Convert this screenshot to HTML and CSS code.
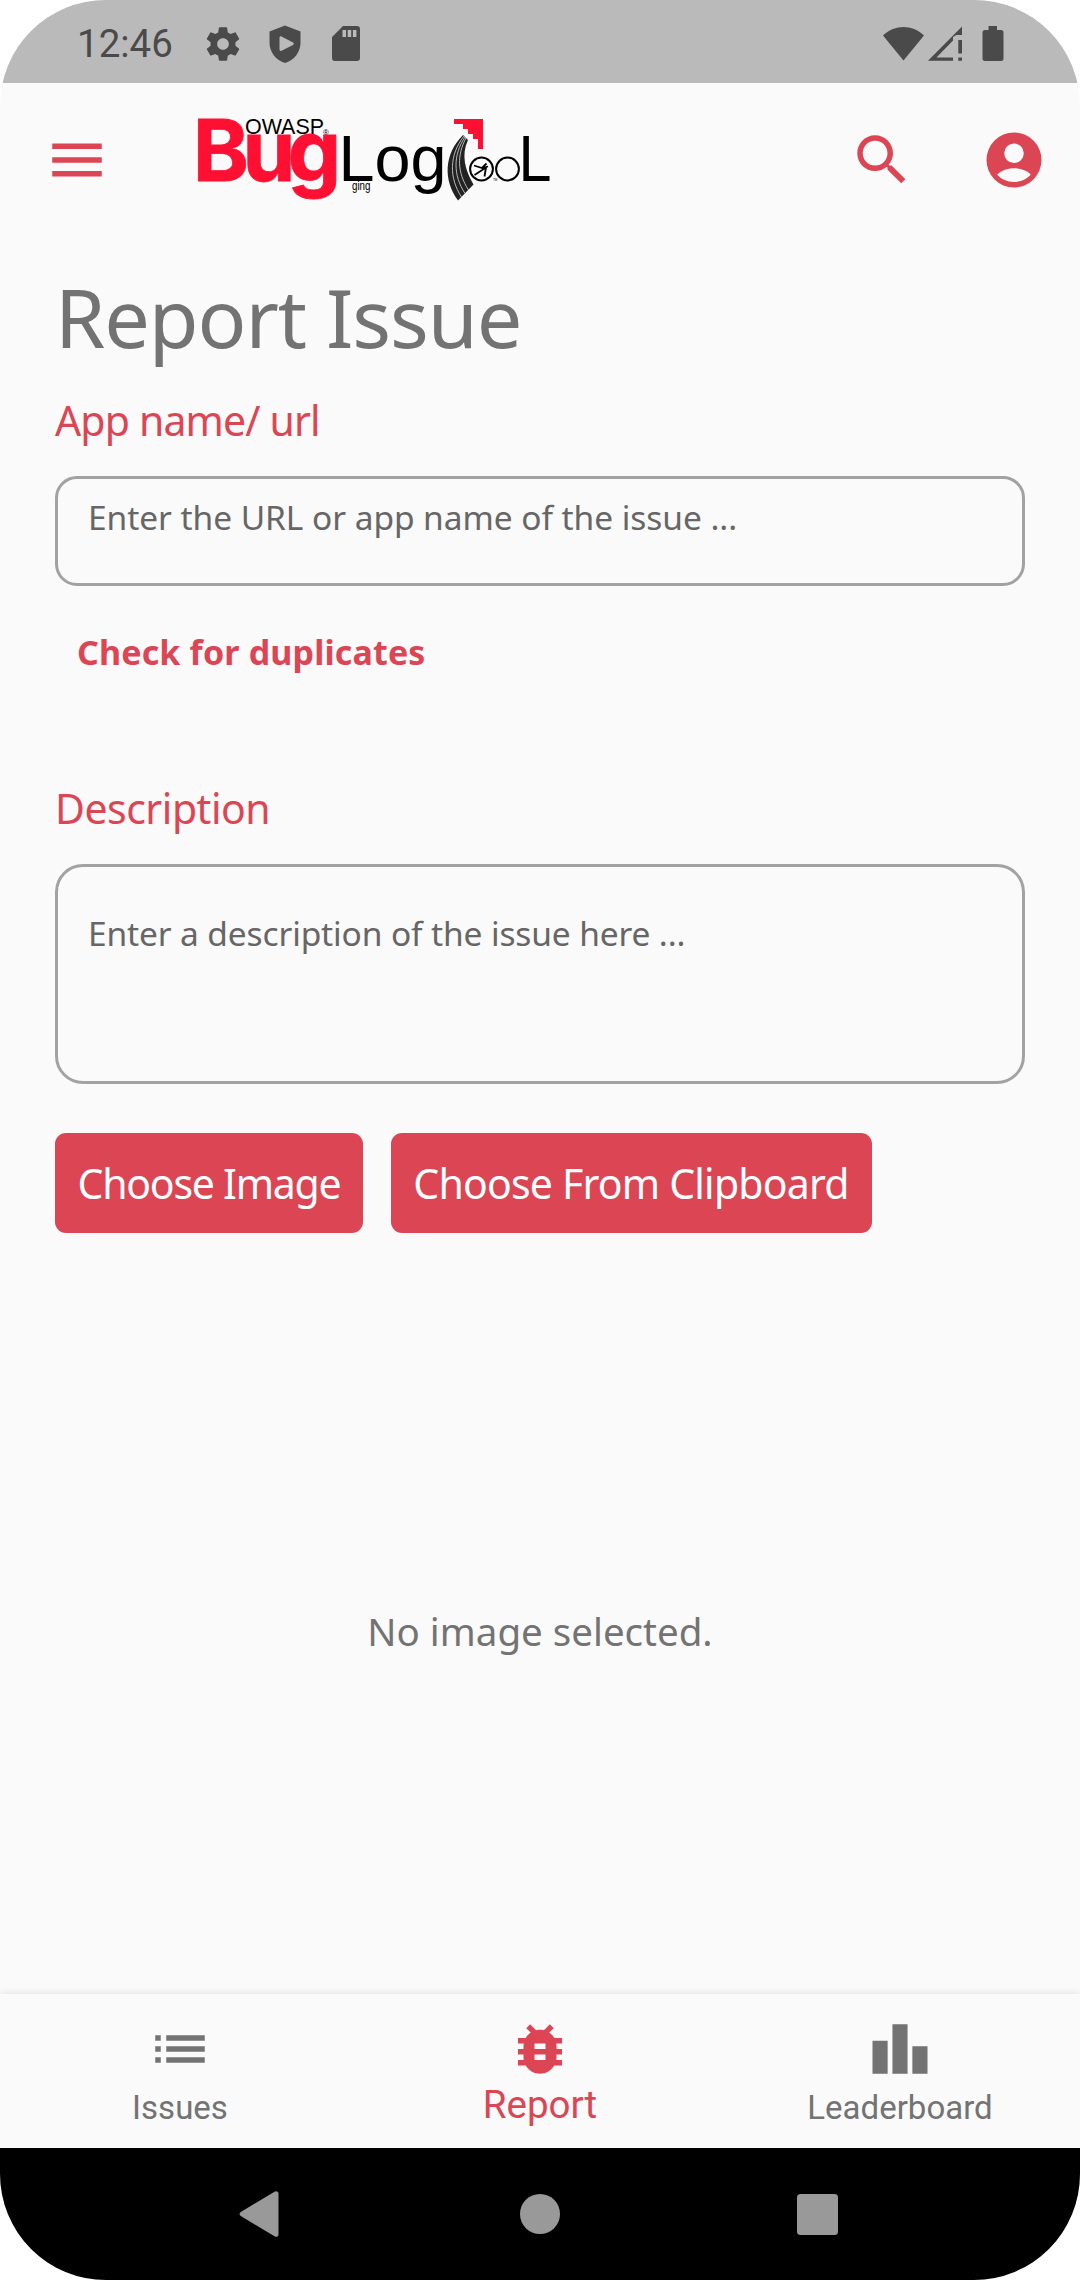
FILE: index.html
```html
<!DOCTYPE html>
<html lang="en">
<head>
<meta charset="utf-8">
<title>BugLog – Report Issue</title>
<link rel="stylesheet" href="styles.css">
</head>
<body>
<div class="phone">
  <header class="status">
    <span class="clock">12:46</span>
    <svg class="gear" width="40" height="40" viewBox="0 0 24 24"><path d="M19.43 12.98c.04-.32.07-.64.07-.98s-.03-.66-.07-.98l2.11-1.65c.19-.15.24-.42.12-.64l-2-3.46c-.12-.22-.39-.3-.61-.22l-2.49 1c-.52-.4-1.08-.73-1.69-.98l-.38-2.65C14.46 2.18 14.25 2 14 2h-4c-.25 0-.46.18-.49.42l-.38 2.65c-.61.25-1.17.59-1.69.98l-2.49-1c-.23-.09-.49 0-.61.22l-2 3.46c-.13.22-.07.49.12.64l2.11 1.65c-.04.32-.07.65-.07.98s.03.66.07.98l-2.11 1.65c-.19.15-.24.42-.12.64l2 3.46c.12.22.39.3.61.22l2.49-1c.52.4 1.08.73 1.69.98l.38 2.65c.03.24.24.42.49.42h4c.25 0 .46-.18.49-.42l.38-2.65c.61-.25 1.17-.59 1.69-.98l2.49 1c.23.09.49 0 .61-.22l2-3.46c.12-.22.07-.49-.12-.64l-2.11-1.65zM12 15.5c-1.93 0-3.5-1.57-3.5-3.5s1.570-3.5 3.500-3.500 3.500 1.570 3.500 3.500-1.570 3.500-3.500 3.500z"/></svg>
    <svg class="shield" width="32" height="38" viewBox="0 0 32 38"><path fill-rule="evenodd" d="M16 0.500 31.500 6.500V18C31.500 27 25 35.500 16 38 7 35.500.500 27 .500 18V6.500ZM12.500 11.500C11.500 11 10.500 11.600 10.500 12.800V24.400c0 1.200 1 1.800 2 1.300l11.500-5.700c1-.6 1-1.900 0-2.500Z"/></svg>
    <svg class="sd" width="28" height="35" viewBox="0 0 28 35"><path fill-rule="evenodd" d="M11 0H25a3 3 0 0 1 3 3V32a3 3 0 0 1-3 3H3a3 3 0 0 1-3-3V11ZM10.500 4V11H14V4ZM15.700 4V11H19.200V4ZM20.900 4V11H24.400V4Z"/></svg>
    <svg class="radio" width="122" height="38" viewBox="0 0 122 38"><path d="M0 10.500C12-.700 29-.700 41 10.500L20.500 35.500Z"/><path fill-rule="evenodd" d="M45 35.700 79 1.500V10H73.500L70 12V35.700ZM53.500 32.500H70V15.500ZM75.300 15H79V28.500H75.300ZM75.300 32.500H79V35.700H75.300Z"/><path d="M105.500 1H114V5H118a2.500 2.500 0 0 1 2.500 2.500V33.500a2.500 2.500 0 0 1-2.500 2.500H102a2.500 2.500 0 0 1-2.500-2.500V7.500A2.500 2.500 0 0 1 102 5H105.500Z"/></svg>
  </header>

  <div class="appbar">
    <svg class="icon" viewBox="0 0 24 24"><path d="M3 18h18v-2H3v2zm0-5h18v-2H3v2zm0-7v2h18V6H3z"/></svg>
    <svg class="logo" width="360" height="90" viewBox="196 115 360 90">
      <g font-family="Liberation Sans, Arial, sans-serif">
        <text class="bug bug-word" x="192.700 242.500 287.500" y="181">Bug</text>
        <text x="245" y="134" font-size="22" textLength="79" lengthAdjust="spacingAndGlyphs">OWASP</text>
        <text x="323" y="134.500" font-size="8">®</text>
        <text x="338.400" y="181" font-size="64" textLength="108" lengthAdjust="spacingAndGlyphs">Log</text>
        <text x="352" y="190" font-size="12" textLength="18.500" lengthAdjust="spacingAndGlyphs">ging</text>
        <text x="518.400" y="181" font-size="64" textLength="33" lengthAdjust="spacingAndGlyphs">L</text>
        <text x="493" y="181" font-size="3">TM</text>
      </g>
      <path class="bug" d="M454 119H483V149H478V139H473V134H468V129H463V124H454Z"/>
      <path fill="#222" d="M463 135C444 154 443 180 458 200.500L473.500 184.500C465 170 461 155 468 140Z"/>
      <g class="ribs"><path d="M464 136C449 155 449 178 461.500 197"/><path d="M465 137C453 155 453 175 465 193.500"/><path d="M466 138C457 155 457 172 468.500 190"/></g>
      <circle class="ring" cx="481.500" cy="169" r="11.400"/>
      <circle class="ring" cx="507.500" cy="169" r="11.400"/>
      <g class="fly"><path d="M474 165.500 482 168 486.500 163.500M474.500 175 486 167.500 484.500 176.500M482 168 488 166.500"/></g>
    </svg>
    <svg class="icon search" viewBox="0 0 24 24"><path d="M15.500 14h-.79l-.28-.27C15.410 12.590 16 11.110 16 9.500 16 5.910 13.090 3 9.500 3S3 5.910 3 9.500 5.910 16 9.500 16c1.610 0 3.090-.59 4.230-1.570l.27.28v.79l5 4.990L20.490 19l-4.990-5zm-6 0C7.010 14 5 11.990 5 9.500S7.010 5 9.500 5 14 7.010 14 9.500 11.990 14 9.500 14z"/></svg>
    <svg class="icon" viewBox="0 0 24 24"><path fill-rule="evenodd" d="M12 2a10 10 0 1 0 0 20 10 10 0 0 0 0-20ZM12 6a3.550 3.550 0 1 1 0 7.100A3.550 3.550 0 0 1 12 6ZM5.900 17.300C7.300 15.900 9.500 15 12 15s4.700.9 6.100 2.300C16.700 19 14.500 20 12 20s-4.700-1-6.100-2.700Z"/></svg>
  </div>

  <main class="form">
    <h1 class="title">Report Issue</h1>
    <h2 class="label label-app">App name/ url</h2>
    <div class="field"><span class="hint hint-app">Enter the URL or app name of the issue ...</span></div>
    <a class="check">Check for duplicates</a>
    <h2 class="label label-desc">Description</h2>
    <div class="field area"><span class="hint hint-desc">Enter a description of the issue here ...</span></div>
    <div class="buttons">
      <button class="btn btn-image">Choose Image</button>
      <button class="btn btn-clip">Choose From Clipboard</button>
    </div>
    <p class="empty">No image selected.</p>
  </main>

  <nav class="tabs">
    <div class="tab"><svg class="icon" viewBox="0 0 24 24"><path d="M3 13h2v-2H3v2zm0 4h2v-2H3v2zm0-8h2V7H3v2zm4 4h14v-2H7v2zm0 4h14v-2H7v2zM7 7v2h14V7H7z"/></svg><span>Issues</span></div>
    <div class="tab active"><svg class="icon" viewBox="0 0 24 24"><path d="M20 8h-2.810c-.45-.78-1.070-1.450-1.820-1.960L17 4.410 15.590 3l-2.170 2.170C12.960 5.060 12.490 5 12 5c-.49 0-.96.06-1.410.17L8.410 3 7 4.410l1.620 1.630C7.880 6.550 7.260 7.220 6.810 8H4v2h2.090c-.05.33-.09.66-.09 1v1H4v2h2v1c0 .34.04.67.09 1H4v2h2.810c1.040 1.790 2.970 3 5.190 3s4.150-1.210 5.190-3H20v-2h-2.090c.05-.33.09-.66.09-1v-1h2v-2h-2v-1c0-.34-.04-.67-.09-1H20V8zm-6 8h-4v-2h4v2zm0-4h-4v-2h4v2z"/></svg><span>Report</span></div>
    <div class="tab"><svg class="icon" viewBox="0 0 24 24"><path d="M7.500 21H2V9h5.500v12zm7.250-18h-5.500v18h5.500V3zM22 11h-5.500v10H22V11z"/></svg><span>Leaderboard</span></div>
  </nav>

  <footer class="system">
    <svg width="40" height="46" viewBox="0 0 40 46"><path d="M35.500.700C37.500-.500 39.500.500 39.500 2.500V43.500c0 2-2 3-4 1.800L1.800 25c-1.700-1-1.700-3 0-4Z"/></svg>
    <svg class="home" width="40" height="40" viewBox="0 0 40 40"><circle cx="20" cy="20" r="20"/></svg>
    <svg width="41" height="41" viewBox="0 0 41 41"><rect width="41" height="41" rx="3.500"/></svg>
  </footer>
</div>
</body>
</html>
```
FILE: styles.css
```css
* { box-sizing: border-box; }
body { margin: 0; background: #fff; }
h1, h2, p { margin: 0; font-weight: 400; }
svg { display: block; flex: none; }

.phone {
  width: 1080px;
  height: 2280px;
  display: flex;
  flex-direction: column;
  background: #fafafa;
  border-radius: 106px;
  overflow: hidden;
  font-family: "Noto Sans", "Open Sans", sans-serif;
  white-space: nowrap;
}

.status {
  height: 83px;
  flex: none;
  display: flex;
  align-items: center;
  padding: 4px 75px 0 77px;
  background: #bababa;
  fill: #4a4a4a;
}
.clock { width: 126px; font: 38.500px/46px Roboto, sans-serif; color: #4a4a4a; }
.shield { margin-left: 26px; }
.sd { margin-left: 31px; }
.radio { margin-left: auto; }

.appbar {
  height: 154px;
  flex: none;
  display: flex;
  align-items: center;
  padding: 0 33px 0 44px;
  fill: #dc4654;
}
.icon { width: 66px; height: 66px; }
.logo { margin-left: 86px; fill: #000; overflow: visible; }
.logo .bug { fill: #ff1033; }
.bug-word { font: 700 85px Inter, sans-serif; stroke: #ff1033; stroke-width: 0.800; }
.ribs { fill: none; stroke: #c8c8c8; stroke-width: 0.900; }
.ring { fill: none; stroke: #000; stroke-width: 2; }
.fly { fill: none; stroke: #000; stroke-width: 1.800; }
.search { margin-left: auto; margin-right: 66px; }

.form {
  flex: 1;
  display: flex;
  flex-direction: column;
  align-items: flex-start;
  padding: 0 55px;
}
.title { height: 110px; margin-top: 27px; font-size: 81px; line-height: 106px; color: #737373; letter-spacing: -1.100px; }
.label { font-size: 41px; line-height: 56px; color: #dc4654; }
.label-app { margin-top: 18px; letter-spacing: -0.850px; }
.field {
  width: 970px;
  height: 110px;
  margin-top: 28px;
  padding: 15px 30px;
  border: 3px solid #a2a2a2;
  border-radius: 22px;
}
.area { height: 220px; padding-top: 43px; border-radius: 28px; }
.hint { display: block; font-size: 33.500px; line-height: 46px; color: #666; }
.hint-app { letter-spacing: -0.060px; }
.hint-desc { letter-spacing: -0.130px; }
.check { margin: 41px 0 0 22px; font-size: 34px; line-height: 50px; font-weight: 700; color: #dc4654; letter-spacing: 0.150px; }
.label-desc { margin-top: 103px; letter-spacing: -0.500px; }
.buttons { display: flex; gap: 27.500px; margin-top: 49px; }
.btn {
  height: 100px;
  border: 0;
  border-radius: 11px;
  padding: 0;
  background: #dc4654;
  color: #fff;
  font: 41px/100px "Noto Sans", "Open Sans", sans-serif;
}
.btn-image { width: 308px; letter-spacing: -1.250px; }
.btn-clip { width: 481px; letter-spacing: -0.800px; }
.empty { align-self: center; margin-top: 370px; font-size: 38.500px; line-height: 56px; color: #737373; }

.tabs {
  height: 154px;
  flex: none;
  display: flex;
  padding-top: 22px;
  box-shadow: 0 0 8px rgba(0, 0, 0, 0.120);
  font: 33px/40px Roboto, sans-serif;
  color: #737373;
  fill: #737373;
}
.tab { flex: 1; display: flex; flex-direction: column; align-items: center; gap: 6px; }
.active { gap: 3px; font-size: 38.500px; color: #dc4654; fill: #dc4654; }

.system {
  height: 132px;
  flex: none;
  display: flex;
  align-items: center;
  padding: 0 242px 0 239px;
  background: #000;
  fill: #999;
}
.home { margin: 0 237px 0 241px; }
```
